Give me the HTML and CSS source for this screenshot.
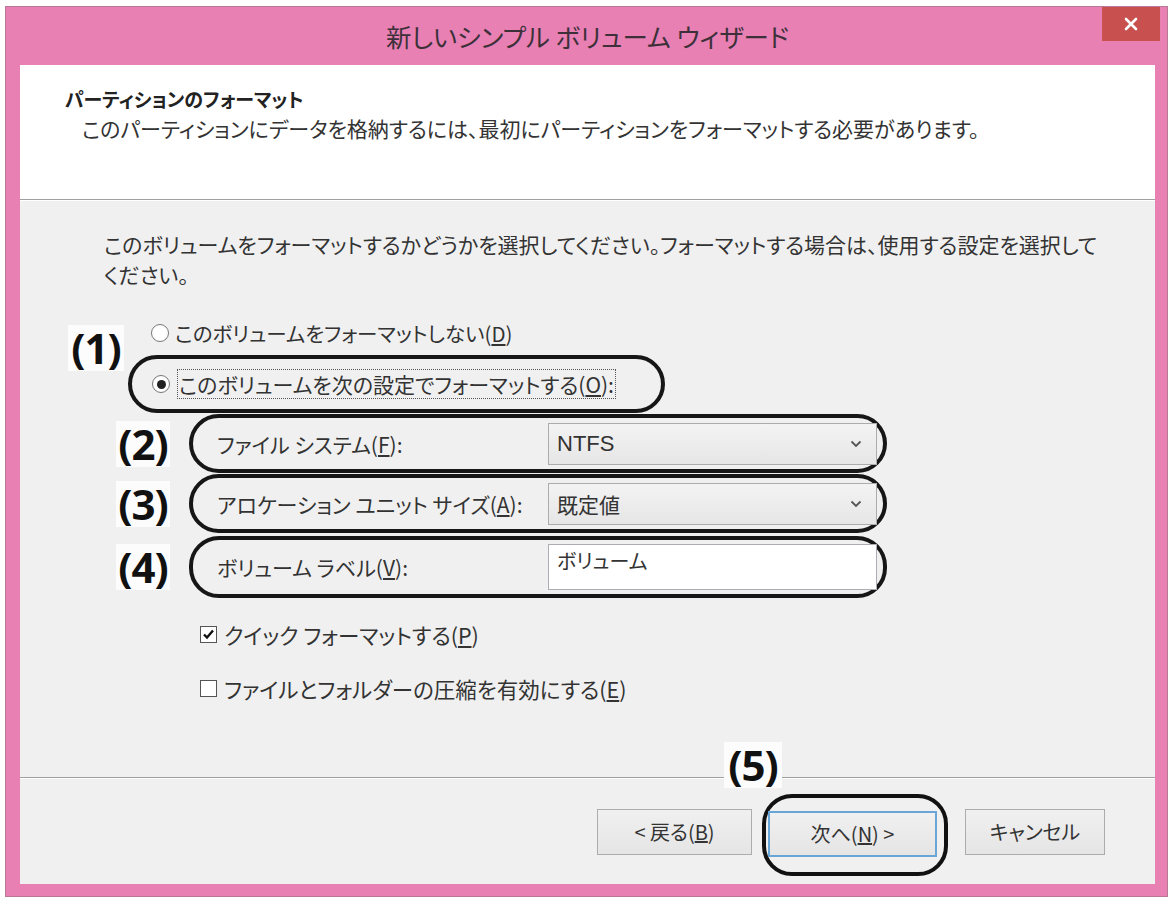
FILE: index.html
```html
<!DOCTYPE html>
<html lang="ja">

<head>
    <meta charset="utf-8">
    <title>新しいシンプル ボリューム ウィザード</title>
    <link rel="stylesheet" href="styles.css">
</head>

<body>
    <div class="window">
        <div class="titlebar">
            <span></span>
            <div class="title">新しいシンプル ボリューム ウィザード</div>
            <div class="close">
                <svg width="14" height="14" viewBox="0 0 14 14">
                    <path d="M2 2 L12 12 M12 2 L2 12" stroke="#fff" stroke-width="2.6" stroke-linecap="round" />
                </svg>
            </div>
        </div>

        <div class="client">
            <div class="header">
                <div class="heading">パーティションのフォーマット</div>
                <div class="subheading">このパーティションにデータを格納するには、最初にパーティションをフォーマットする必要があります。</div>
            </div>

            <div class="content">
                <p class="intro">このボリュームをフォーマットするかどうかを選択してください。フォーマットする場合は、使用する設定を選択して<br>ください。</p>

                <div class="choice">
                    <div class="num num-1">(1)</div>
                    <div class="radio-row">
                        <span class="radio"></span>
                        <span>このボリュームをフォーマットしない(<u>D</u>)</span>
                    </div>
                    <div class="pill pill-radio">
                        <span class="radio checked"></span>
                        <span class="focus">このボリュームを次の設定でフォーマットする(<u>O</u>):</span>
                    </div>
                </div>

                <div class="field-row">
                    <div class="num">(2)</div>
                    <div class="pill field">
                        <span class="field-label">ファイル システム(<u>F</u>):</span>
                        <div class="combo">
                            <span class="latin">NTFS</span>
                            <svg width="12" height="8" viewBox="0 0 12 8">
                                <path d="M1.5 1.5 L6 6 L10.5 1.5" fill="none" stroke="#555" stroke-width="1.8" />
                            </svg>
                        </div>
                    </div>
                </div>
                <div class="field-row">
                    <div class="num">(3)</div>
                    <div class="pill field">
                        <span class="field-label">アロケーション ユニット サイズ(<u>A</u>):</span>
                        <div class="combo">
                            <span>既定値</span>
                            <svg width="12" height="8" viewBox="0 0 12 8">
                                <path d="M1.5 1.5 L6 6 L10.5 1.5" fill="none" stroke="#555" stroke-width="1.8" />
                            </svg>
                        </div>
                    </div>
                </div>
                <div class="field-row field-row-last">
                    <div class="num">(4)</div>
                    <div class="pill field field-text">
                        <span class="field-label">ボリューム ラベル(<u>V</u>):</span>
                        <div class="textbox">ボリューム</div>
                    </div>
                </div>

                <div class="checks">
                    <div class="check-row">
                        <span class="checkbox">
                            <svg width="13" height="13" viewBox="0 0 13 13">
                                <path d="M2 6.5 L5 9.5 L11 2.5" fill="none" stroke="#111" stroke-width="2.4" />
                            </svg>
                        </span>
                        <span>クイック フォーマットする(<u>P</u>)</span>
                    </div>
                    <div class="check-row">
                        <span class="checkbox"></span>
                        <span>ファイルとフォルダーの圧縮を有効にする(<u>E</u>)</span>
                    </div>
                </div>
            </div>

            <div class="footer">
                <button class="btn">&lt; 戻る(<u>B</u>)</button>
                <div class="ring">
                    <span class="num num-5">(5)</span>
                    <button class="btn btn-default">次へ(<u>N</u>) &gt;</button>
                </div>
                <button class="btn btn-cancel">キャンセル</button>
            </div>
        </div>
    </div>
</body>

</html>
```

FILE: styles.css
```css
body {
    margin: 0;
    background-color: white;
    font-family: "Noto Sans CJK JP", sans-serif;
    font-feature-settings: "palt";
    color: #333;
}

.window {
    margin: 6px 0 0 5px;
    width: 1163px;
    height: 891px;
    box-sizing: border-box;
    background-color: #e880b4;
    border: 1px solid #b97896;
    padding: 0 12px 12px 14px;
    display: flex;
    flex-direction: column;
}

/* title bar */

.titlebar {
    height: 58px;
    display: grid;
    grid-template-columns: 1fr auto 1fr;
    align-items: start;
}

.title {
    font-size: 25.5px;
    line-height: 58px;
    color: #3d3039;
}

.close {
    justify-self: end;
    margin-right: -5px;
    width: 58px;
    height: 34px;
    background-color: #c8504f;
    display: flex;
    align-items: center;
    justify-content: center;
}

.client {
    flex: 1;
    display: flex;
    flex-direction: column;
    background-color: #f0f0f0;
}

/* header */

.header {
    height: 135px;
    box-sizing: border-box;
    background-color: white;
    border-bottom: 1px solid #a0a0a0;
    padding: 20px 0 0 45px;
}

.heading {
    font-size: 19px;
    font-weight: bold;
    line-height: 28px;
    color: #222;
}

.subheading {
    font-size: 21px;
    line-height: 30px;
    padding-left: 17px;
}

/* body */

.content {
    flex: 1;
    border-top: 1px solid white;
    border-bottom: 1px solid #a0a0a0;
}

.intro {
    margin: 28px 0 0 84px;
    font-size: 21px;
    line-height: 30px;
}

.num {
    font-family: "Open Sans", sans-serif;
    font-feature-settings: normal;
    font-weight: bold;
    font-size: 42px;
    line-height: 46px;
    letter-spacing: -1px;
    color: #111;
    background-color: #fcfcfc;
    text-align: center;
}

.choice {
    margin: 30px 0 0 48px;
    display: grid;
    grid-template-columns: 56px auto;
    column-gap: 4px;
    row-gap: 8px;
    justify-content: start;
}

.num-1 {
    grid-row: 1 / span 2;
    align-self: start;
    margin-top: 6px;
}

.radio-row {
    display: flex;
    align-items: center;
    gap: 6px;
    padding-left: 23px;
    height: 28px;
    font-size: 20.5px;
}

.radio {
    width: 18px;
    height: 18px;
    box-sizing: border-box;
    border: 1px solid #777;
    border-radius: 50%;
    background-color: white;
    display: flex;
    align-items: center;
    justify-content: center;
}

.radio.checked::after {
    content: "";
    width: 9px;
    height: 9px;
    border-radius: 50%;
    background-color: #222;
}

.pill {
    border: 4px solid #161616;
    border-radius: 30px;
    box-sizing: border-box;
    display: flex;
    align-items: center;
    font-size: 21px;
}

.pill-radio {
    width: 537px;
    height: 58px;
    padding-left: 20px;
    gap: 7px;
}

.focus {
    border: 1px dotted #555;
    padding: 0 1px;
    line-height: 28px;
}

.field-row {
    display: flex;
    align-items: center;
    gap: 19px;
    margin: 1px 0 0 96px;
}

.field-row-last {
    margin-top: 3px;
}

.field-row .num {
    width: 54px;
}

.field {
    width: 698px;
    height: 59px;
    padding: 0 6px 0 24px;
}

.field-text {
    height: 62px;
}

.field-label {
    width: 331px;
}

.combo {
    flex: 1;
    height: 42px;
    box-sizing: border-box;
    border: 1px solid #acacac;
    background: linear-gradient(#f3f3f3, #e6e6e6);
    display: flex;
    align-items: center;
    justify-content: space-between;
    padding: 0 14px 0 8px;
    font-size: 21px;
}

.latin {
    font-family: "Liberation Sans", sans-serif;
    font-size: 22px;
}

.textbox {
    flex: 1;
    height: 46px;
    box-sizing: border-box;
    border: 1px solid #abadb3;
    background-color: white;
    padding: 3px 8px;
    font-size: 20px;
    line-height: 26px;
}

.checks {
    margin: 22px 0 0 180px;
    display: flex;
    flex-direction: column;
    gap: 26px;
}

.check-row {
    display: flex;
    align-items: center;
    gap: 7px;
    height: 28px;
    font-size: 21.5px;
}

.checkbox {
    width: 17px;
    height: 17px;
    box-sizing: border-box;
    border: 1px solid #555;
    background-color: white;
    display: flex;
    align-items: center;
    justify-content: center;
}

/* footer */

.footer {
    height: 105px;
    border-top: 1px solid white;
    display: flex;
    align-items: center;
    justify-content: flex-end;
    padding-right: 50px;
}

.btn {
    font-family: "Noto Sans CJK JP", sans-serif;
    font-feature-settings: "palt";
    font-size: 20px;
    color: #333;
    width: 155px;
    height: 46px;
    border: 1px solid #acacac;
    background: linear-gradient(#f0f0f0, #e5e5e5);
}

.btn-cancel {
    width: 140px;
}

.ring {
    position: relative;
    margin: 6px 17px 0 10px;
    border: 4px solid #111;
    border-radius: 30px;
    padding: 13px 7px 15px 2px;
}

.btn-default {
    width: 169px;
    border: 2px solid #6aa5d8;
    display: block;
}

.num-5 {
    position: absolute;
    left: -42px;
    top: -56px;
    width: 58px;
}
```
